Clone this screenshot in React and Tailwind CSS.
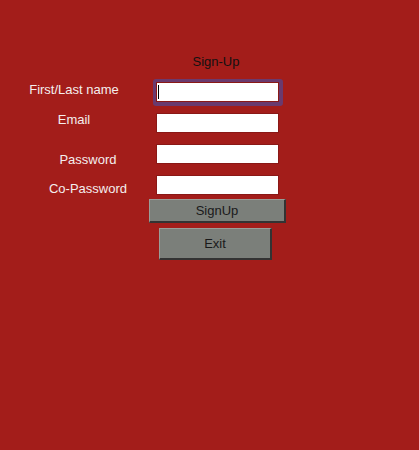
export default function App() {
  const rows = [
    { label: "First/Last name", labelCls: "pr-[8px] mt-[0px]", focused: true },
    { label: "Email", labelCls: "pr-[8px] mt-[-1px]" },
    { label: "Password", labelCls: "pl-[20px] mt-[8px]" },
    { label: "Co-Password", labelCls: "pl-[20px] mt-[6px]" },
  ];

  return (
    <div
      className="w-[419px] h-[450px] bg-[#a31d1a] pt-[54px] text-[13px] leading-[15px]"
      style={{ fontFamily: '"Liberation Sans", Arial, sans-serif' }}
    >
      <div className="flex">
        <div className="w-[156px]" />
        <div className="w-[123px] pr-[3px] text-center text-[#111]">Sign-Up</div>
      </div>

      <div className="mt-[13px] flex flex-col gap-[11px]">
        {rows.map((r) => (
          <div key={r.label} className="flex items-start h-[20px]">
            <div className={`w-[156px] text-center text-[#f4eeee] ${r.labelCls}`}>{r.label}</div>
            <div className="relative">
              {r.focused && (
                <div className="absolute -inset-[3.5px] rounded-[3px] bg-[#6a3a6e]" />
              )}
              <input
                type="text"
                className="relative block w-[123px] h-[20px] bg-white border border-[#8a1816] outline-none px-[2px]"
              />
              {r.focused && (
                <span className="absolute left-[2px] top-[3px] w-[1px] h-[14px] bg-black" />
              )}
            </div>
          </div>
        ))}
      </div>

      <div className="mt-[4px] flex flex-col">
        <button className="ml-[149px] w-[137px] h-[24px] bg-[#7b7f7a] border border-t-[#9a9d98] border-l-[#9a9d98] border-b-2 border-r-2 border-b-[#333] border-r-[#333] text-[#1a1a1a] text-[13px]">
          SignUp
        </button>
        <button className="mt-[5px] ml-[159px] w-[113px] h-[32px] bg-[#7b7f7a] border border-t-[#9a9d98] border-l-[#9a9d98] border-b-2 border-r-2 border-b-[#333] border-r-[#333] text-[#1a1a1a] text-[13px]">
          Exit
        </button>
      </div>
    </div>
  );
}
